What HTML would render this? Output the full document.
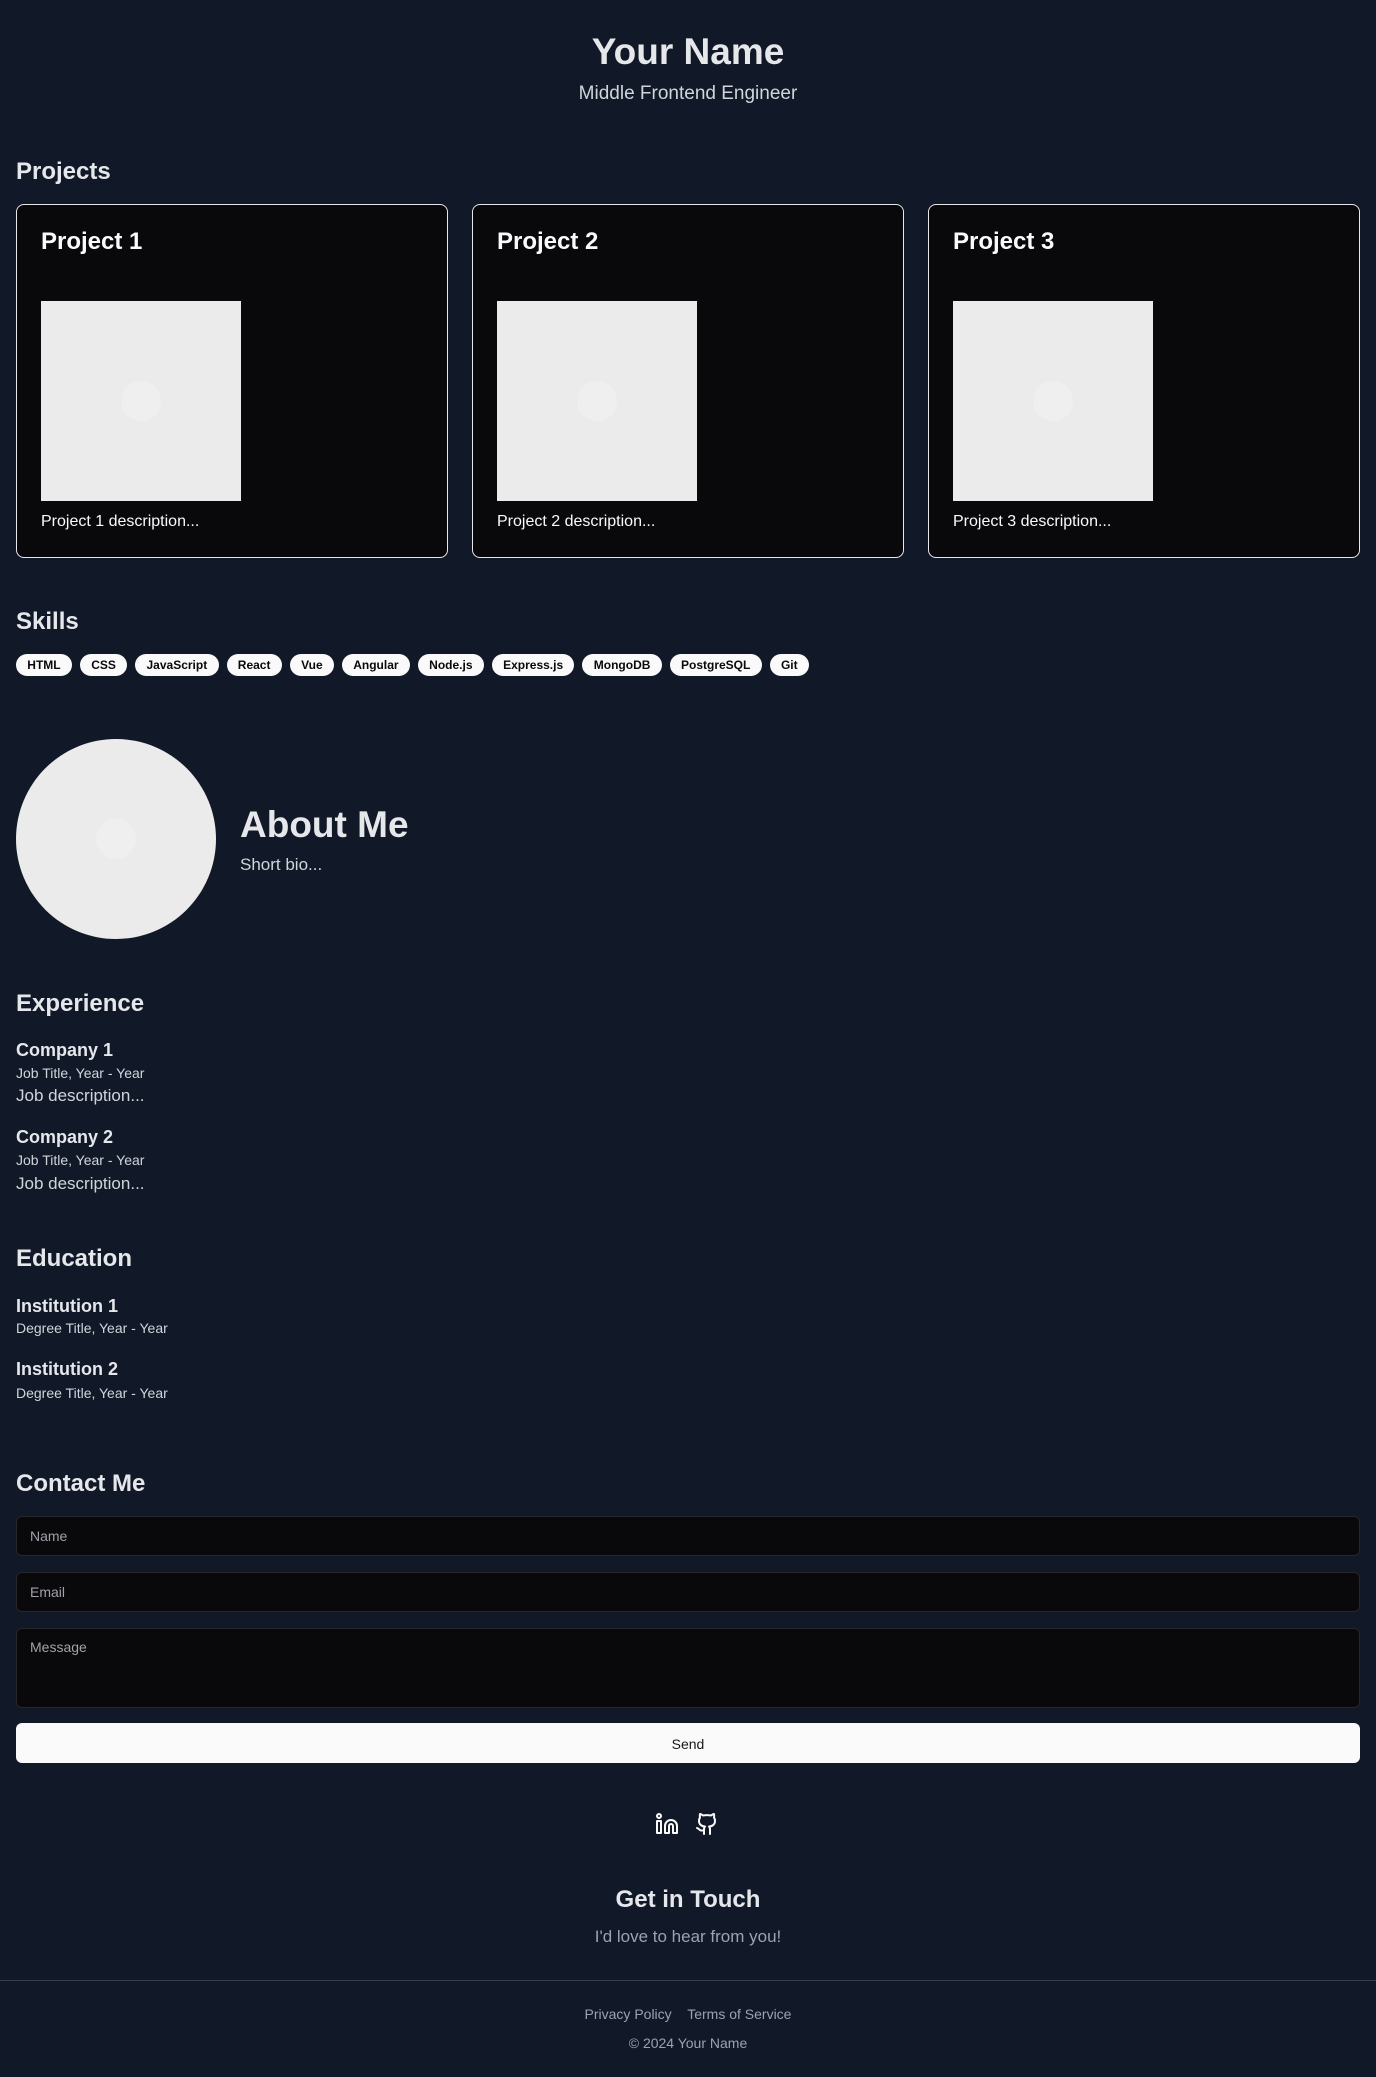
<!DOCTYPE html>
<html><head><meta charset="utf-8"><style>
*{box-sizing:border-box;margin:0;padding:0}
body{width:1376px;height:2077px;background:#111827;color:#e5e7eb;font-family:"Liberation Sans",sans-serif;position:relative;overflow:hidden}
.a{position:absolute;white-space:nowrap}
.c{left:0;width:1376px;text-align:center}
h2{font-size:24px;font-weight:700;color:#e5e7eb}
.card{position:absolute;top:204px;width:432px;height:354px;background:#09090b;border:1px solid #e5e7eb;border-radius:8px}
.card .t{position:absolute;left:24px;top:23px;font-size:24px;font-weight:700;color:#fafafa}
.card .img{position:absolute;left:24px;top:96px;width:200px;height:200px;background:#ebebeb}
.card .img:after,.circ:after{content:"";position:absolute;left:80px;top:80px;width:40px;height:40px;border-radius:50%;background:#efefef}
.card .d{position:absolute;left:24px;top:308px;font-size:16px;color:#fafafa}
.badges{position:absolute;left:16px;top:654px;display:flex;gap:8px}
.badges span{background:#fafafa;color:#09090b;font-size:12px;font-weight:700;border-radius:11px;padding:0 11.3px;height:22px;line-height:22px}
.in{position:absolute;left:16px;width:1344px;background:#09090b;border:1px solid #27272a;border-radius:6px;font-size:14px;color:#a1a1aa;padding:11px 13px}
</style></head><body>
<div class="a c" style="top:31px;font-size:37px;font-weight:700;color:#e5e7eb">Your Name</div>
<div class="a c" style="top:83px;font-size:19px;color:#d1d5db">Middle Frontend Engineer</div>
<h2 class="a" style="left:16px;top:158px">Projects</h2>
<div class="card" style="left:16px"><div class="t">Project 1</div><div class="img"></div><div class="d">Project 1 description...</div></div>
<div class="card" style="left:472px"><div class="t">Project 2</div><div class="img"></div><div class="d">Project 2 description...</div></div>
<div class="card" style="left:928px"><div class="t">Project 3</div><div class="img"></div><div class="d">Project 3 description...</div></div>
<h2 class="a" style="left:16px;top:608px">Skills</h2>
<div class="badges"><span>HTML</span><span>CSS</span><span>JavaScript</span><span>React</span><span>Vue</span><span>Angular</span><span>Node.js</span><span>Express.js</span><span>MongoDB</span><span>PostgreSQL</span><span>Git</span></div>
<div class="a circ" style="left:16px;top:739px;width:200px;height:200px;border-radius:50%;background:#ebebeb"></div>
<div class="a" style="left:240px;top:804px;font-size:37px;font-weight:700">About Me</div>
<div class="a" style="left:240px;top:855px;font-size:17px;color:#d1d5db">Short bio...</div>
<h2 class="a" style="left:16px;top:990px">Experience</h2>
<div class="a" style="left:16px;top:1040px;font-size:18px;font-weight:700">Company 1</div>
<div class="a" style="left:16px;top:1065px;font-size:14px;color:#d1d5db">Job Title, Year - Year</div>
<div class="a" style="left:16px;top:1086px;font-size:17px;color:#d1d5db">Job description...</div>
<div class="a" style="left:16px;top:1127px;font-size:18px;font-weight:700">Company 2</div>
<div class="a" style="left:16px;top:1152px;font-size:14px;color:#d1d5db">Job Title, Year - Year</div>
<div class="a" style="left:16px;top:1174px;font-size:17px;color:#d1d5db">Job description...</div>
<h2 class="a" style="left:16px;top:1245px">Education</h2>
<div class="a" style="left:16px;top:1296px;font-size:18px;font-weight:700">Institution 1</div>
<div class="a" style="left:16px;top:1320px;font-size:14px;color:#d1d5db">Degree Title, Year - Year</div>
<div class="a" style="left:16px;top:1359px;font-size:18px;font-weight:700">Institution 2</div>
<div class="a" style="left:16px;top:1385px;font-size:14px;color:#d1d5db">Degree Title, Year - Year</div>
<h2 class="a" style="left:16px;top:1470px">Contact Me</h2>
<div class="in" style="top:1516px;height:40px">Name</div>
<div class="in" style="top:1572px;height:40px">Email</div>
<div class="in" style="top:1628px;height:80px;padding-top:10px">Message</div>
<div class="a" style="left:16px;top:1723px;width:1344px;height:40px;background:#fafafa;border-radius:6px;color:#18181b;font-size:14px;text-align:center;line-height:42px">Send</div>
<svg class="a" style="left:655px;top:1812px" width="24" height="24" viewBox="0 0 24 24" fill="none" stroke="#fafafa" stroke-width="2" stroke-linecap="round" stroke-linejoin="round"><path d="M16 8a6 6 0 0 1 6 6v7h-4v-7a2 2 0 0 0-4 0v7h-4v-7a6 6 0 0 1 6-6z"/><rect x="2" y="9" width="4" height="12"/><circle cx="4" cy="4" r="2"/></svg>
<svg class="a" style="left:695px;top:1812px" width="24" height="24" viewBox="0 0 24 24" fill="none" stroke="#fafafa" stroke-width="2" stroke-linecap="round" stroke-linejoin="round"><path d="M15 22v-4a4.8 4.8 0 0 0-1-3.5c3 0 6-2 6-5.5.08-1.25-.27-2.48-1-3.5.28-1.15.28-2.350 0-3.5 0 0-1 0-3 1.5-2.64-.5-5.36-.5-8 0C6 2 5 2 5 2c-.3 1.15-.3 2.35 0 3.5A5.4 5.4 0 0 0 4 9c0 3.5 3 5.5 6 5.5-.39.49-.68 1.05-.85 1.650-.17.6-.22 1.23-.15 1.85v4"/><path d="M9 18c-4.51 2-5-2-7-2"/></svg>
<div class="a c" style="top:1886px;font-size:24px;font-weight:700">Get in Touch</div>
<div class="a c" style="top:1927px;font-size:17px;color:#9ca3af">I'd love to hear from you!</div>
<div class="a" style="left:0;top:1980px;width:1376px;height:1px;background:#374151"></div>
<div class="a c" style="top:2006px;font-size:14px;color:#9ca3af">Privacy Policy&nbsp;&nbsp;&nbsp;&nbsp;Terms of Service</div>
<div class="a c" style="top:2035px;font-size:14px;color:#9ca3af">© 2024 Your Name</div>
</body></html>
